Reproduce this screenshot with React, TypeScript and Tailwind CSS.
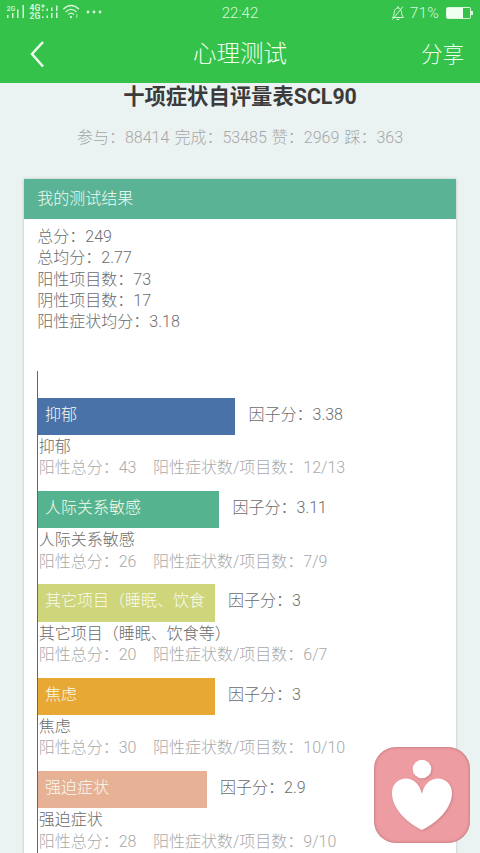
interface Factor {
  name: string;
  score: string;
  total: number;
  ratio: string;
  width: number;
  color: string;
}

const summary = ["总分：249", "总均分：2.77", "阳性项目数：73", "阴性项目数：17", "阳性症状均分：3.18"];

const factors: Factor[] = [
  { name: "抑郁", score: "3.38", total: 43, ratio: "12/13", width: 197, color: "bg-[#4972a8]" },
  { name: "人际关系敏感", score: "3.11", total: 26, ratio: "7/9", width: 181, color: "bg-[#55b48f]" },
  { name: "其它项目（睡眠、饮食等）", score: "3", total: 20, ratio: "6/7", width: 176.5, color: "bg-[#cfd57a]" },
  { name: "焦虑", score: "3", total: 30, ratio: "10/10", width: 176.5, color: "bg-[#e7a834]" },
  { name: "强迫症状", score: "2.9", total: 28, ratio: "9/10", width: 168.5, color: "bg-[#e7b196]" },
];

// a bar only has room for as many 16px characters as fit inside it
const barLabel = (factor: Factor) => factor.name.slice(0, Math.floor((factor.width - 7) / 16));

function SignalIcons() {
  return (
    <svg width="104" height="20" viewBox="0 0 104 20" fill="#d9f7dc" className="font-['Roboto'] font-medium">
      <text x="6.5" y="10.5" fontSize="7">2G</text>
      <path d="M7 15h1.5v3H7zM12 13h1.5v5H12zM17 9.5h1.5V18H17zM22.500 5H24v13h-1.500z" />
      <text x="29.500" y="11" fontSize="8.500" fontWeight="700">4G</text>
      <text x="29.500" y="18.500" fontSize="8.500" fontWeight="700">2G</text>
      <path d="M41 5.500h4v1h-4zM42.500 4h1v4h-1zM42 9.500h1.500V11H42zM46.500 8.500H48V11h-1.500zM51 7.500h1.500V11H51zM56 5.500h1.500V11H56zM42 16.500h1.500V18H42zM46.500 15.500H48V18h-1.500zM51 13h1.500v5H51zM56 12.500h1.500V18H56z" />
      <g fill="none" stroke="#d9f7dc" strokeWidth="1.300">
        <path d="M63.300 9.200Q71 1.800 79 9.200M65.700 12Q71 6.800 76.500 12M68.200 14.500Q71 11.800 74 14.500" />
      </g>
      <circle cx="71" cy="17" r="1.200" />
      <path d="M76 14.500h1.500v1H76zM76 16.500h1.500v1H76z" />
      <circle cx="88" cy="12" r="1.400" />
      <circle cx="94" cy="12" r="1.400" />
      <circle cx="100" cy="12" r="1.400" />
    </svg>
  );
}

function MutedBell() {
  return (
    <svg width="14" height="16" viewBox="0 0 14 16" fill="none" stroke="#d9f7dc" strokeWidth="1">
      <path d="M1.500 12.500C3 11 3 9.500 3.200 7.500C3.500 4.500 5 3 7 3S10.200 4.500 10.600 7.500C10.800 9.500 11 11 12.500 12.500Z" />
      <path d="M6 2.500Q7 1 8 2.500M5.500 14Q7 15.500 8.500 14M1.500 14.500L12 1.500" />
    </svg>
  );
}

function StatusBar() {
  return (
    <div className="grid h-6 grid-cols-3 text-[15px] leading-6 text-[#d9f7dc]">
      <div className="flex">
        <SignalIcons />
      </div>
      <div className="pt-px text-center">22:42</div>
      <div className="flex items-center justify-end pr-[7px]">
        <MutedBell />
        <span className="mr-[7px] ml-[5px] text-[15.500px] tracking-[0.2px]">71%</span>
        <svg width="27" height="12" viewBox="0 0 27 12" fill="none">
          <rect x="0.5" y="0.5" width="24" height="11" rx="1" stroke="#d9f7dc" />
          <rect x="1" y="1" width="16" height="10" fill="#effff0" />
          <path d="M25 4h2v4h-2z" fill="#d9f7dc" />
        </svg>
      </div>
    </div>
  );
}

function NavBar() {
  return (
    <div className="grid h-[59px] grid-cols-3 items-center text-[#effff0]">
      <svg width="18" height="30" viewBox="0 0 18 30" fill="none" className="ml-[29px]">
        <path d="M14 3L3 15L14 27.500" stroke="currentColor" strokeWidth="2.500" />
      </svg>
      <h1 className="pt-[3px] text-center text-[23.500px] font-light">心理测试</h1>
      <span className="pt-[3px] pr-4 text-right text-[21.33px] font-light">分享</span>
    </div>
  );
}

function FactorRow({ factor }: { factor: Factor }) {
  return (
    <div className="mb-[13.33px] h-[80px]">
      <div className="flex h-[37.33px] leading-[34px]">
        <div className={`pl-[7px] whitespace-nowrap text-[#f7fbef] ${factor.color}`} style={{ width: factor.width }}>
          {barLabel(factor)}
        </div>
        <span className="ml-[13.5px]">因子分：{factor.score}</span>
      </div>
      <div className="pt-px pl-[0.7px]">{factor.name}</div>
      <div className="flex gap-[16.500px] pl-[0.7px] text-[#a9a9a9]">
        <span>阳性总分：{factor.total}</span>
        <span>阳性症状数/项目数：{factor.ratio}</span>
      </div>
    </div>
  );
}

function HeartBadge() {
  return (
    <div className="absolute top-[747px] left-[374px] h-24 w-24 rounded-[22px] bg-[#ed9ca1] shadow-[inset_0_0_3px_#a8686e]">
      <svg width="96" height="96" viewBox="0 0 96 96" fill="#fff" className="drop-shadow-[1px_1px_1px_#b5737999]">
        <circle cx="48" cy="22" r="9.300" />
        <path d="M48 47C46 37 39 31.500 32 31.500C23.500 31.500 18 38 18 46C18 61 32 75 48 83C64 75 78 61 78 46C78 38 72 31.500 64 31.500C56.500 31.500 50 37 48 47Z" />
      </svg>
    </div>
  );
}

export default function App() {
  return (
    <div className="relative h-[853px] w-[480px] overflow-hidden bg-[#ebf2f2] font-['Roboto','Noto_Sans_CJK_SC',sans-serif] text-base leading-[21.33px] font-light text-[#6c6c6c]">
      <header className="h-[83px] bg-[#34c24b]">
        <StatusBar />
        <NavBar />
      </header>

      <h2 className="h-[42px] pt-[3px] text-center text-[21.33px] font-bold text-[#3b3b3b]">十项症状自评量表SCL90</h2>
      <p className="h-[53.500px] pt-[2px] text-center text-[#a5a8a8] [word-spacing:1.2px]">
        参与：88414 完成：53485 赞：2969 踩：363
      </p>

      <main className="mx-6 h-[700px] bg-white shadow-[0_0_3px_#b8c0c0]">
        <div className="h-10 bg-[#5ab395] px-[13.33px] leading-10 text-[#effcf5]">我的测试结果</div>
        <div className="px-[13.33px] pt-[7.500px]">
          {summary.map(line => (
            <div key={line}>{line}</div>
          ))}
        </div>
        <div className="mt-[38.500px] ml-[13px] h-[500px] border-l border-[#666] pt-[26.67px]">
          {factors.map(factor => (
            <FactorRow key={factor.name} factor={factor} />
          ))}
        </div>
      </main>

      <HeartBadge />
    </div>
  );
}
